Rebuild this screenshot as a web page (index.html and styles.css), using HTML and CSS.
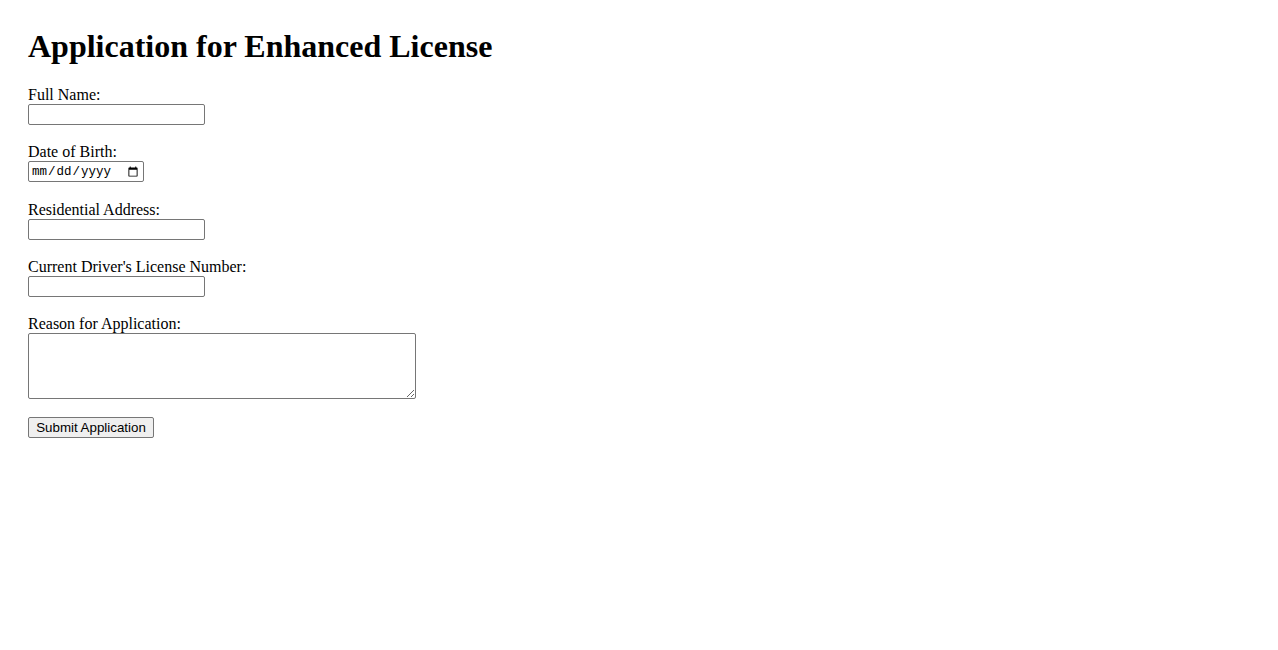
FILE: index.html
```html
<!DOCTYPE html>
<html lang="en">
<head>
    <meta charset="UTF-8">
    <meta name="viewport" content="width=device-width, initial-scale=1.0">
    <title>Application for Enhanced License</title>
    <link rel="stylesheet" href="styles.css">
</head>
<body>
    <h1>Application for Enhanced License</h1>
    <form class="license-form">
        <div class="field">
            <label for="full-name">Full Name:</label>
            <input type="text" id="full-name" name="fullName" class="text-input">
        </div>
        <div class="field">
            <label for="dob">Date of Birth:</label>
            <input type="date" id="dob" name="dob" class="date-input">
        </div>
        <div class="field">
            <label for="address">Residential Address:</label>
            <input type="text" id="address" name="address" class="text-input">
        </div>
        <div class="field">
            <label for="license-number">Current Driver's License Number:</label>
            <input type="text" id="license-number" name="licenseNumber" class="text-input">
        </div>
        <div class="field field-reason">
            <label for="reason">Reason for Application:</label>
            <textarea id="reason" name="reason" rows="4" cols="50"></textarea>
        </div>
        <button type="submit" class="submit-btn">Submit Application</button>
    </form>
</body>
</html>
```

FILE: styles.css
```css
body {
    font-family: "Liberation Serif", "Times New Roman", serif;
    font-size: 16px;
    margin: 0;
    padding: 28px;
    color: #000;
    background-color: #fff;
}
h1 {
    font-size: 32px;
    font-weight: bold;
    margin: 0 0 21px;
}
.field {
    margin-bottom: 18.35px;
}
.field-reason {
    margin-bottom: 17.6px;
}
.field label {
    display: block;
}
.field input,
.field textarea {
    display: block;
    box-sizing: border-box;
    margin: 0;
    border: 1px solid #767676;
    border-radius: 2px;
}
.text-input {
    width: 177px;
    height: 21px;
    font-family: "Liberation Sans", Arial, sans-serif;
    font-size: 13.33px;
}
.date-input {
    width: 116px;
    height: 21px;
    padding: 1px 2px;
    font-family: "Liberation Mono", monospace;
    font-size: 12.5px;
}
textarea {
    width: 388px;
    height: 66px;
    font-family: "Liberation Mono", monospace;
    font-size: 13.33px;
}
.submit-btn {
    box-sizing: border-box;
    width: 126px;
    height: 21px;
    margin: 0;
    padding: 1px 6px;
    font-family: "Liberation Sans", Arial, sans-serif;
    font-size: 13.33px;
    color: #000;
    background-color: #efefef;
    border: 1px solid #767676;
    border-radius: 2px;
}
```
